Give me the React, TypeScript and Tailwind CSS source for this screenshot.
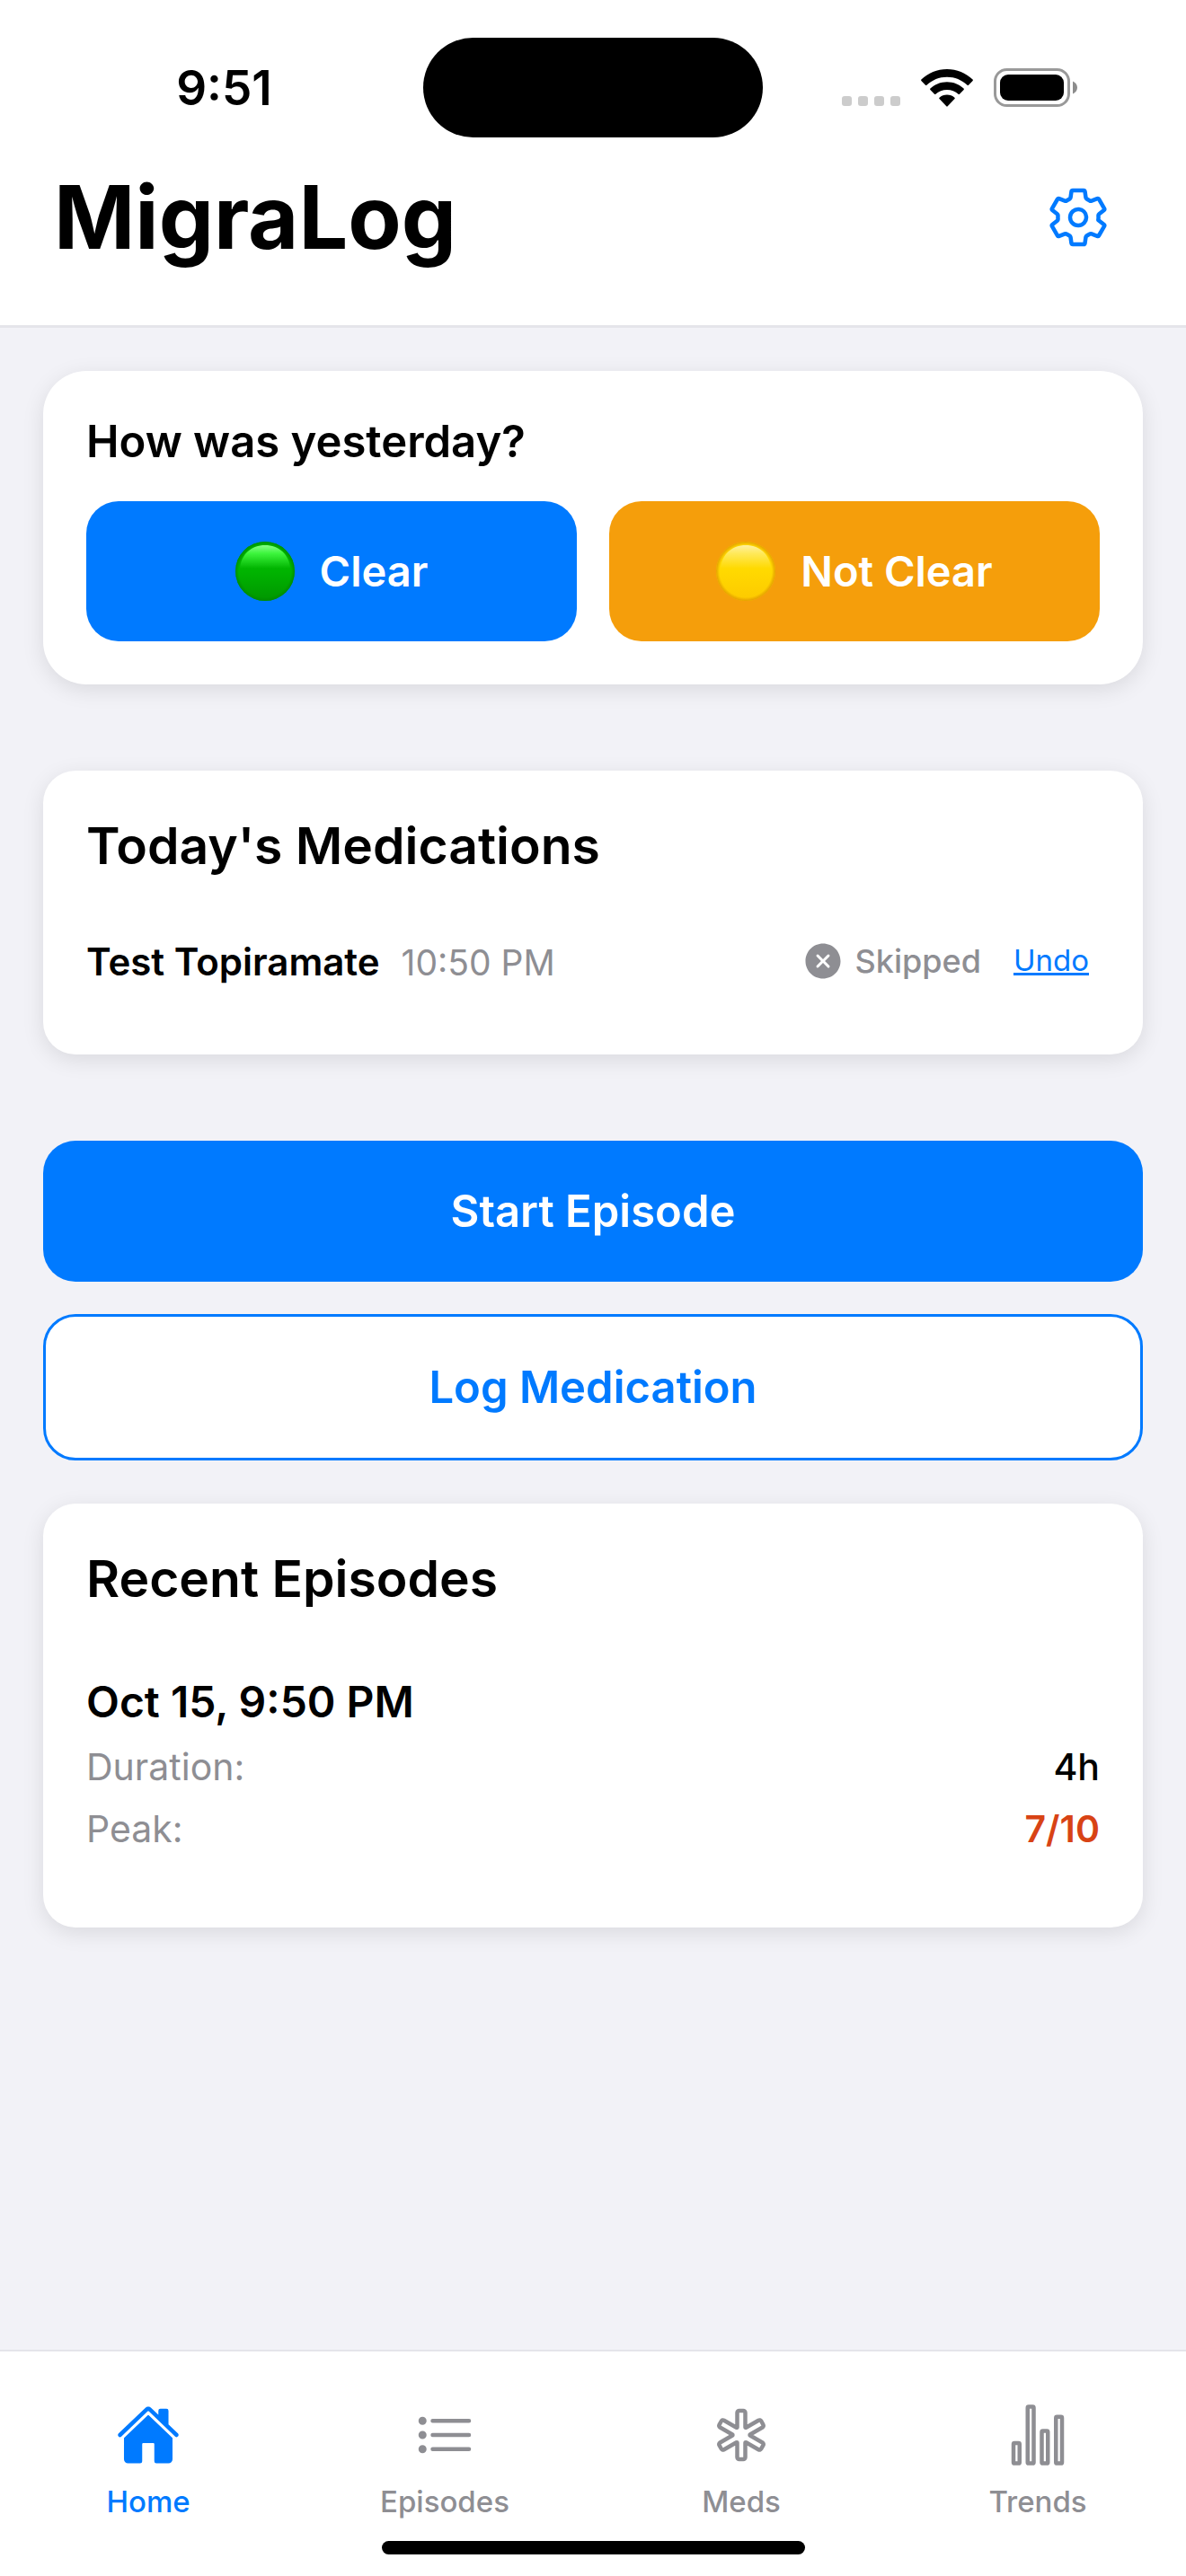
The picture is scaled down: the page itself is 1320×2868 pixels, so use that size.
import { useId } from "react";
import type { ComponentType, ReactNode } from "react";
import {
  IoCloseCircle,
  IoHome,
  IoListOutline,
  IoMedicalOutline,
  IoSettingsOutline,
  IoStatsChartOutline,
} from "react-icons/io5";

function WifiIcon() {
  return (
    <svg width="58" height="42" viewBox="0 0 58 42" aria-hidden="true">
      <path d="M29 0C40 0 50 4.300 57.600 11.500Q58.200 12.200 57.600 12.900L53 17.700Q52.300 18.300 51.600 17.700C45.500 12 37.600 8.700 29 8.700S12.500 12 6.400 17.700Q5.700 18.300 5 17.700L.4 12.900Q-.2 12.200.4 11.500C8 4.300 18 0 29 0Z" />
      <path d="M29 14.300C36.200 14.300 42.700 17 47.600 21.600Q48.300 22.300 47.600 23L43 27.800Q42.300 28.400 41.600 27.800C38.300 24.800 33.900 23 29 23S19.700 24.800 16.400 27.800Q15.700 28.400 15 27.800L10.400 23Q9.700 22.300 10.400 21.600C15.300 17 21.800 14.300 29 14.300Z" />
      <path d="M29 28.500C32.200 28.500 35.200 29.700 37.500 31.700Q38.200 32.400 37.500 33.100L29.700 41.300Q29 42 28.300 41.300L20.500 33.100Q19.800 32.400 20.500 31.700C22.800 29.700 25.800 28.500 29 28.500Z" />
    </svg>
  );
}

function BatteryIcon() {
  return (
    <svg width="94" height="43" viewBox="0 0 94 43" aria-hidden="true">
      <rect x="1.500" y="1.500" width="82" height="40" rx="13" fill="none" stroke="#999999" strokeWidth="3" />
      <rect x="7" y="7" width="71" height="29" rx="9" />
      <path d="M88 14.500C91 15.700 93 18.300 93 21.500S91 27.300 88 28.500Z" fill="#8c8c8c" />
    </svg>
  );
}

function StatusBar() {
  return (
    <div className="grid grid-cols-[1fr_378px_1fr] items-center">
      <div className="flex justify-center pl-7 text-[53px] leading-[60px] font-semibold">9:51</div>
      <div className="h-[111px] rounded-full bg-black" />
      <div className="flex items-center justify-center gap-[23px] pr-8">
        <div className="flex gap-[7px] self-end pb-px">
          {[0, 1, 2, 3].map((dot) => (
            <span key={dot} className="size-[11px] rounded-[3px] bg-[#cccccc]" />
          ))}
        </div>
        <WifiIcon />
        <BatteryIcon />
      </div>
    </div>
  );
}

type BallColors = { rim: string; shine: string; top: string; middle: string; bottom: string };

const green: BallColors = { rim: "#008a00", shine: "#86ff86", top: "#3df53d", middle: "#00b400", bottom: "#009600" };
const yellow: BallColors = { rim: "#e29a00", shine: "#fff0a0", top: "#ffe95a", middle: "#ffd900", bottom: "#fdc900" };

function Ball({ colors }: { colors: BallColors }) {
  const id = useId();
  return (
    <svg width="66" height="66" viewBox="0 0 66 66" aria-hidden="true">
      <defs>
        <linearGradient id={id + "body"} x1="0" y1="0" x2="0" y2="1">
          <stop offset="0" stopColor={colors.middle} />
          <stop offset="0.500" stopColor={colors.middle} />
          <stop offset="1" stopColor={colors.bottom} />
        </linearGradient>
        <linearGradient id={id + "shine"} x1="0" y1="0" x2="0" y2="1">
          <stop offset="0" stopColor={colors.shine} />
          <stop offset="0.350" stopColor={colors.top} />
          <stop offset="1" stopColor={colors.middle} />
        </linearGradient>
        <radialGradient id={id + "rim"}>
          <stop offset="0.880" stopColor={colors.rim} stopOpacity="0" />
          <stop offset="1" stopColor={colors.rim} stopOpacity="0.900" />
        </radialGradient>
      </defs>
      <circle cx="33" cy="33" r="33" fill={"url(#" + id + "body)"} />
      <path d="M5 30C6 14 18 4 33 4S60 14 61 30Z" fill={"url(#" + id + "shine)"} />
      <circle cx="33" cy="33" r="33" fill={"url(#" + id + "rim)"} />
    </svg>
  );
}

function Card({ children, className }: { children: ReactNode; className: string }) {
  return (
    <section className={"bg-white p-12 shadow-[0_6px_24px_rgba(0,0,0,0.1)] " + className}>{children}</section>
  );
}

type Tab = { label: string; Icon: ComponentType<{ size?: number }>; active?: boolean };

const tabs: Tab[] = [
  { label: "Home", Icon: IoHome, active: true },
  { label: "Episodes", Icon: IoListOutline },
  { label: "Meds", Icon: IoMedicalOutline },
  { label: "Trends", Icon: IoStatsChartOutline },
];

export default function App() {
  return (
    <div className="flex min-h-screen flex-col bg-[#f2f2f7] font-['Inter',sans-serif] text-black">
      <header className="border-b-3 border-[#e5e5ea] bg-white pt-[42px] pb-[60px]">
        <StatusBar />
        <div className="flex items-center justify-between px-[60px] pt-[29px]">
          <h1 className="text-[97px] leading-[120px] font-bold">MigraLog</h1>
          <button type="button" aria-label="Settings" className="p-6 text-[#007aff]">
            <IoSettingsOutline size={72} />
          </button>
        </div>
      </header>

      <main className="flex flex-1 flex-col px-12 pt-12">
        <Card className="rounded-[48px]">
          <h2 className="text-[49px] leading-[61px] font-semibold">How was yesterday?</h2>
          <div className="mt-9 grid grid-cols-2 gap-9">
            <button
              type="button"
              className="flex h-[156px] items-center justify-center gap-7 rounded-[36px] bg-[#007aff] text-[47px] font-semibold text-white"
            >
              <Ball colors={green} />
              Clear
            </button>
            <button
              type="button"
              className="flex h-[156px] items-center justify-center gap-7 rounded-[36px] bg-[#f59e0b] text-[47px] font-semibold text-white"
            >
              <Ball colors={yellow} />
              Not Clear
            </button>
          </div>
        </Card>

        <Card className="mt-24 rounded-[36px]">
          <h2 className="text-[57px] leading-[72px] font-semibold">Today's Medications</h2>
          <div className="mt-9 flex h-28 items-center justify-between">
            <div className="flex items-baseline gap-6">
              <span className="text-[42px] font-semibold">Test Topiramate</span>
              <span className="text-[39px] text-[#8e8e93]">10:50 PM</span>
            </div>
            <div className="flex items-center gap-6 text-[#8e8e93]">
              <div className="flex items-center gap-3">
                <IoCloseCircle size={48} />
                <span className="text-[36px] font-medium">Skipped</span>
              </div>
              <button type="button" className="px-3 text-[33px] text-[#007aff] underline">
                Undo
              </button>
            </div>
          </div>
        </Card>

        <button
          type="button"
          className="mt-24 h-[157px] rounded-[36px] bg-[#007aff] text-[49px] font-semibold text-white"
        >
          Start Episode
        </button>
        <button
          type="button"
          className="mt-9 h-[163px] rounded-[36px] border-3 border-[#007aff] bg-white text-[49px] font-semibold text-[#007aff]"
        >
          Log Medication
        </button>

        <Card className="mt-12 rounded-[36px]">
          <h2 className="text-[57px] leading-[72px] font-semibold">Recent Episodes</h2>
          <div className="pt-[72px] pb-9">
            <h3 className="text-[48px] leading-[58px] font-semibold">Oct 15, 9:50 PM</h3>
            <dl className="text-[41px] leading-[51px]">
              <div className="flex justify-between pt-[18px]">
                <dt className="text-[#8e8e93]">Duration:</dt>
                <dd className="font-medium">4h</dd>
              </div>
              <div className="flex justify-between pt-[18px]">
                <dt className="text-[#8e8e93]">Peak:</dt>
                <dd className="font-semibold text-[#d84315]">7/10</dd>
              </div>
            </dl>
          </div>
        </Card>
      </main>

      <footer className="flex flex-col items-center border-t-2 border-[#e5e5ea] bg-white pt-[57px] pb-6">
        <nav className="grid w-full grid-cols-4">
          {tabs.map(({ label, Icon, active }) => (
            <a
              key={label}
              href={"#" + label.toLowerCase()}
              aria-current={active ? "page" : undefined}
              className={
                "flex flex-col items-center gap-[18px] text-[33px] leading-[40px] font-medium " +
                (active ? "text-[#007aff]" : "text-[#8e8e93]")
              }
            >
              <Icon size={72} />
              {label}
            </a>
          ))}
        </nav>
        <div className="mt-6 h-[15px] w-[471px] rounded-full bg-black" />
      </footer>
    </div>
  );
}
